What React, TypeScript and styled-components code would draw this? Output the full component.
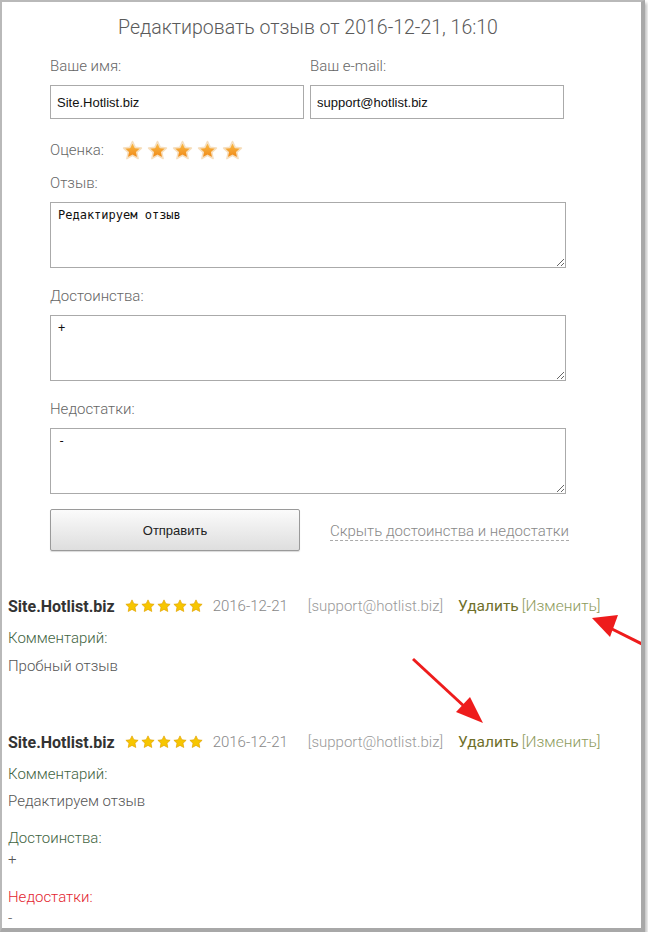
import React from "react";
import styled, { createGlobalStyle } from "styled-components";

const GlobalStyle = createGlobalStyle`
  html, body {
    margin: 0;
    padding: 0;
    background: #ffffff;
  }
  body {
    font-family: Roboto, "Open Sans", sans-serif;
  }
`;

const Frame = styled.div`
  position: relative;
  width: 639px;
  height: 926px;
  overflow: hidden;
  background: #fff;
  border-left: 2px solid #b9b9b9;
  border-top: 2px solid #b9b9b9;
  border-right: 4px solid #a8a8a8;
  border-bottom: 4px solid #a8a8a8;
  box-shadow: 2px 3px 3px rgba(0, 0, 0, 0.25);
`;

const Form = styled.form`
  width: 516px;
  margin-left: 48px;
  padding-top: 12px;
  display: flex;
  flex-direction: column;
`;

const Title = styled.h1`
  margin: 0 0 14px;
  font-size: 19.5px;
  line-height: 28px;
  font-weight: 300;
  color: #5a5a5a;
  text-align: center;
`;

const Row = styled.div`
  display: grid;
  grid-template-columns: 254px 254px;
  column-gap: 6px;
`;

const Field = styled.label<{ $mt?: number }>`
  display: flex;
  flex-direction: column;
  gap: 9px;
  margin-top: ${(p) => p.$mt ?? 0}px;
`;

const Label = styled.span`
  font-size: 15px;
  line-height: 20px;
  font-weight: 300;
  color: #666;
`;

const Input = styled.input`
  box-sizing: border-box;
  width: 100%;
  height: 34px;
  border: 1px solid #aaa;
  padding: 0 6px;
  font-family: "Liberation Sans", Arial, sans-serif;
  font-size: 13px;
  color: #111;
  outline: none;
`;

const RatingRow = styled.div`
  display: flex;
  align-items: center;
  height: 24px;
  margin-top: 19px;
  margin-bottom: 11px;
`;

const RatingLabel = styled(Label)`
  width: 72px;
`;

const Stars = styled.div<{ $gap: number }>`
  display: flex;
  align-items: center;
  gap: ${(p) => p.$gap}px;
`;

const TextArea = styled.textarea`
  box-sizing: border-box;
  width: 100%;
  height: 66px;
  border: 1px solid #aaa;
  padding: 5px 7px;
  font-family: "DejaVu Sans Mono", monospace;
  font-size: 12px;
  line-height: 15px;
  color: #111;
  outline: none;
  resize: vertical;
`;

const Actions = styled.div`
  display: flex;
  align-items: center;
  margin-top: 15px;
  gap: 30px;
`;

const SubmitButton = styled.button`
  box-sizing: border-box;
  width: 250px;
  height: 42px;
  flex: none;
  border: 1px solid #9a9a9a;
  border-radius: 2px;
  background: linear-gradient(#fbfbfb, #dedede);
  box-shadow: 0 1px 1px rgba(0, 0, 0, 0.15);
  font-family: "Liberation Sans", Arial, sans-serif;
  font-size: 13px;
  color: #222;
`;

const ToggleLink = styled.a`
  white-space: nowrap;
  font-size: 15px;
  font-weight: 300;
  color: #888;
  text-decoration: none;
  border-bottom: 1px dashed #aaa;
  line-height: 18px;
  margin-top: 2px;
`;

const Reviews = styled.div`
  padding-left: 6px;
  margin-top: 44px;
  display: flex;
  flex-direction: column;
  gap: 54px;
`;

const Review = styled.div`
  display: flex;
  flex-direction: column;
`;

const Header = styled.div`
  display: flex;
  align-items: center;
  height: 22px;
  font-size: 15px;
  font-weight: 300;
  margin-bottom: 10px;
  white-space: nowrap;
`;

const Author = styled.span`
  font-size: 16px;
  font-weight: 700;
  color: #333;
  margin-right: 10px;
`;

const DateText = styled.span`
  color: #888;
  margin-left: 10px;
  margin-right: 20px;
`;

const Email = styled.span`
  color: #999;
  margin-right: 15px;
`;

const Delete = styled.a`
  font-size: 15.5px;
  color: #6f6f2a;
  font-weight: 400;
  margin-right: 3px;
`;

const Edit = styled.a`
  font-size: 15.5px;
  color: #8d9b5c;
`;

const SectionLabel = styled.div<{ $tone: "green" | "red"; $mt?: number }>`
  font-size: 15px;
  font-weight: 300;
  line-height: 22px;
  margin-top: ${(p) => p.$mt ?? 0}px;
  color: ${(p) => (p.$tone === "red" ? "#e3262f" : "#3f643f")};
`;

const SectionText = styled.div<{ $mt?: number; $lh?: number }>`
  font-size: 15px;
  font-weight: 300;
  line-height: ${(p) => p.$lh ?? 22}px;
  margin-top: ${(p) => p.$mt ?? 0}px;
  color: #555;
`;

const ArrowLayer = styled.svg`
  position: absolute;
  left: -2px;
  top: -2px;
  width: 648px;
  height: 938px;
  pointer-events: none;
`;

const BigStar: React.FC = () => (
  <svg width="21" height="21" viewBox="0 0 24 24">
    <defs>
      <linearGradient id="bigStar" x1="0" y1="0" x2="0" y2="1">
        <stop offset="0" stopColor="#fbc04a" />
        <stop offset="1" stopColor="#ef8514" />
      </linearGradient>
    </defs>
    <path
      d="M12 1.8l3.1 6.6 7.1.8-5.3 4.9 1.5 7.1L12 17.6l-6.4 3.6 1.5-7.1L1.8 9.2l7.1-.8z"
      fill="url(#bigStar)"
      stroke="#f6dfbf"
      strokeWidth="1.8"
      strokeLinejoin="round"
    />
  </svg>
);

const SmallStar: React.FC = () => (
  <svg width="14" height="14" viewBox="0 0 24 24">
    <path
      d="M12 1.5l3.2 6.7 7.3.9-5.4 5 1.4 7.3L12 17.8l-6.5 3.6 1.4-7.3-5.4-5 7.3-.9z"
      fill="#f7c600"
      stroke="#e2a300"
      strokeWidth="1.2"
      strokeLinejoin="round"
    />
  </svg>
);

const ReviewHeader: React.FC = () => (
  <Header>
    <Author>Site.Hotlist.biz</Author>
    <Stars $gap={2}>
      {[0, 1, 2, 3, 4].map((i) => (
        <SmallStar key={i} />
      ))}
    </Stars>
    <DateText>2016-12-21</DateText>
    <Email>[support@hotlist.biz]</Email>
    <Delete>Удалить</Delete>
    <Edit>[Изменить]</Edit>
  </Header>
);

const App: React.FC = () => {
  return (
    <>
      <GlobalStyle />
      <Frame>
        <Form onSubmit={(e) => e.preventDefault()}>
          <Title>Редактировать отзыв от 2016-12-21, 16:10</Title>
          <Row>
            <Field>
              <Label>Ваше имя:</Label>
              <Input defaultValue="Site.Hotlist.biz" />
            </Field>
            <Field>
              <Label>Ваш e-mail:</Label>
              <Input defaultValue="support@hotlist.biz" />
            </Field>
          </Row>
          <RatingRow>
            <RatingLabel>Оценка:</RatingLabel>
            <Stars $gap={4}>
              {[0, 1, 2, 3, 4].map((i) => (
                <BigStar key={i} />
              ))}
            </Stars>
          </RatingRow>
          <Field>
            <Label>Отзыв:</Label>
            <TextArea defaultValue="Редактируем отзыв" />
          </Field>
          <Field $mt={18}>
            <Label>Достоинства:</Label>
            <TextArea defaultValue="+" />
          </Field>
          <Field $mt={18}>
            <Label>Недостатки:</Label>
            <TextArea defaultValue="-" />
          </Field>
          <Actions>
            <SubmitButton type="submit">Отправить</SubmitButton>
            <ToggleLink>Скрыть достоинства и недостатки</ToggleLink>
          </Actions>
        </Form>

        <Reviews>
          <Review>
            <ReviewHeader />
            <SectionLabel $tone="green">Комментарий:</SectionLabel>
            <SectionText $mt={6}>Пробный отзыв</SectionText>
          </Review>
          <Review>
            <ReviewHeader />
            <SectionLabel $tone="green">Комментарий:</SectionLabel>
            <SectionText $mt={5}>Редактируем отзыв</SectionText>
            <SectionLabel $tone="green" $mt={15}>Достоинства:</SectionLabel>
            <SectionText $lh={20}>+</SectionText>
            <SectionLabel $tone="red" $mt={17}>Недостатки:</SectionLabel>
            <SectionText $lh={20}>-</SectionText>
          </Review>
        </Reviews>

        <ArrowLayer viewBox="0 0 648 938">
          <line x1="413" y1="659" x2="466" y2="708" stroke="#ee1c1c" strokeWidth="3" />
          <polygon points="483,723 456,712 470,697" fill="#ee1c1c" />
          <line x1="642" y1="644" x2="610" y2="628" stroke="#ee1c1c" strokeWidth="3" />
          <polygon points="592,618 618,615 610,637" fill="#ee1c1c" />
        </ArrowLayer>
      </Frame>
    </>
  );
};

export default App;
